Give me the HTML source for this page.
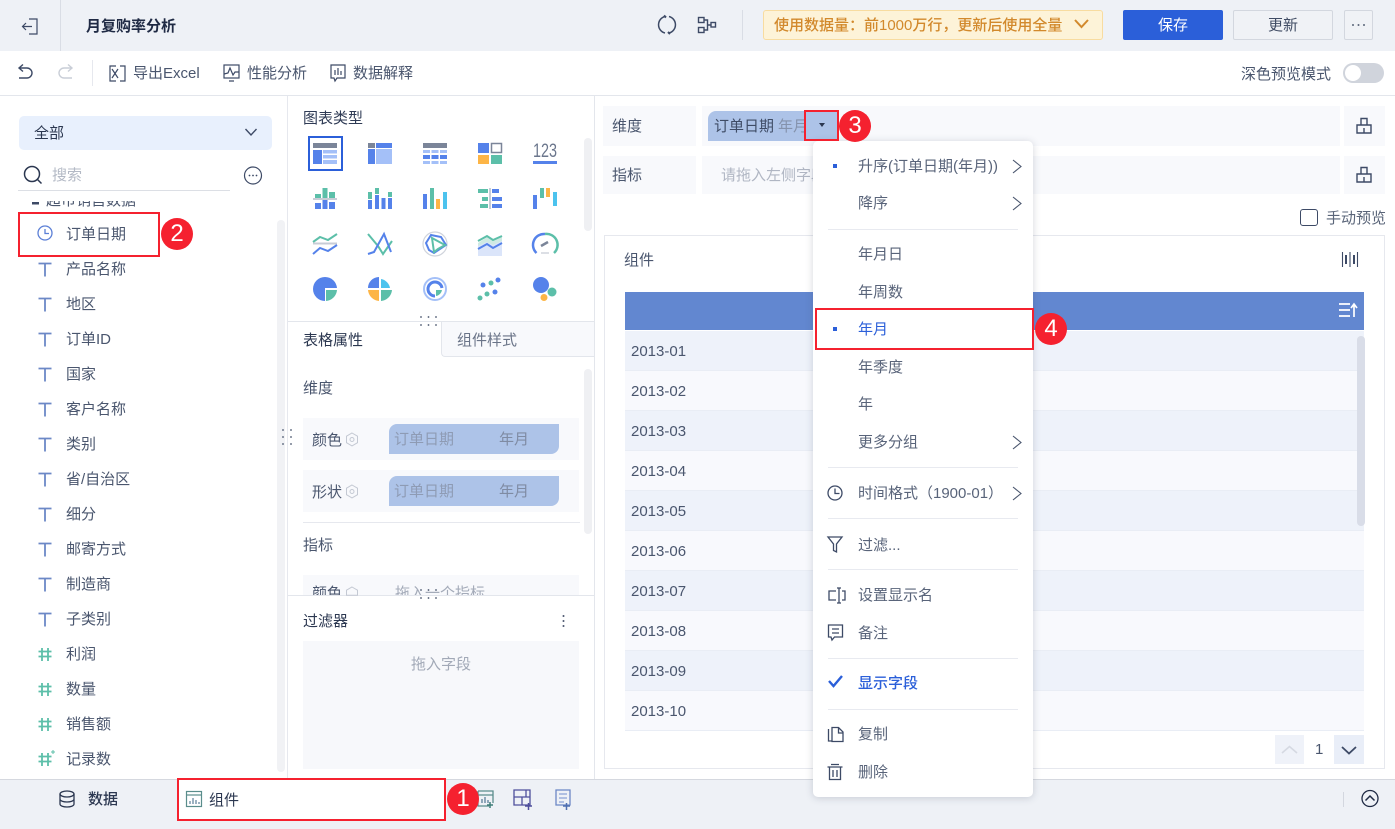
<!DOCTYPE html>
<html lang="zh"><head><meta charset="utf-8"><title>月复购率分析</title>
<style>
html,body{margin:0;padding:0;background:#fff}
#p{position:relative;width:1395px;height:829px;overflow:hidden;background:#fff;font-family:"Liberation Sans","Noto Sans CJK SC",sans-serif;font-size:15px;letter-spacing:0;color:#4a566e}
.b{position:absolute}
.t{position:absolute;line-height:20px;height:20px;white-space:nowrap;transform:translateY(1px)}
svg{position:absolute;left:0;top:0;overflow:visible}
.ic{fill:none;stroke:#3d4a66;stroke-width:1.4}
.red{position:absolute;border:2px solid #f5212f;box-sizing:border-box}
.num{position:absolute;width:32px;height:32px;border-radius:50%;background:#f5212f;color:#fff;font-size:24px;line-height:32px;text-align:center;letter-spacing:0}
.row{position:absolute;left:625px;width:739px;height:40px;box-sizing:border-box;border-bottom:1px solid #e9edf5}
.row span{position:absolute;left:6px;top:11px;line-height:20px;color:#4a566e}
.hr{position:absolute;left:15px;width:190px;height:1px;background:#e8eaf0}
.m{position:absolute;left:45px;line-height:20px;height:20px;white-space:nowrap;color:#59647a;transform:translateY(1px)}
</style></head><body><div id="p">

<!-- bars -->
<div class="b" style="left:0;top:0;width:1395px;height:51px;background:#eef1f6"></div>
<div class="b" style="left:60px;top:0;width:1px;height:51px;background:#d9dde5"></div>
<div class="b" style="left:0;top:95px;width:1395px;height:1px;background:#e3e6ec"></div>
<div class="b" style="left:92px;top:60px;width:1px;height:26px;background:#e6e8ee"></div>
<div class="t" style="left:86px;top:16px;color:#1f2a44;font-weight:bold">月复购率分析</div>
<div class="b" style="left:742px;top:10px;width:1px;height:30px;background:#d9dde5"></div>
<div class="b" style="left:763px;top:10px;width:340px;height:30px;box-sizing:border-box;background:#fdf3d8;border:1px solid #f8dca0;border-radius:3px"></div>
<div class="t" style="left:774px;top:15px;color:#d2892c;font-weight:500">使用数据量：前1000万行，更新后使用全量</div>
<div class="b" style="left:1123px;top:10px;width:100px;height:30px;background:#2b5fd9;border-radius:2px;color:#fff;text-align:center;line-height:32px">保存</div>
<div class="b" style="left:1233px;top:10px;width:100px;height:30px;box-sizing:border-box;background:#f0f2f6;border:1px solid #d3d7df;border-radius:2px;text-align:center;line-height:30px;color:#404c64">更新</div>
<div class="b" style="left:1344px;top:10px;width:29px;height:30px;box-sizing:border-box;background:#f0f2f6;border:1px solid #d3d7df;border-radius:2px"></div>

<div class="t" style="left:133px;top:63px">导出Excel</div>
<div class="t" style="left:247px;top:63px">性能分析</div>
<div class="t" style="left:353px;top:63px">数据解释</div>
<div class="t" style="left:1241px;top:64px">深色预览模式</div>
<div class="b" style="left:1343px;top:63px;width:41px;height:20px;background:#d0d4dc;border-radius:10px"></div>
<div class="b" style="left:1345px;top:65px;width:16px;height:16px;background:#fff;border-radius:50%"></div>

<!-- left panel -->
<div class="b" style="left:287px;top:96px;width:1px;height:683px;background:#e6e8ee"></div>
<div class="b" style="left:19px;top:116px;width:253px;height:34px;background:#e8f0fd;border-radius:5px"></div>
<div class="t" style="left:34px;top:123px;color:#2b3750">全部</div>
<div class="t" style="left:52px;top:165px;color:#b3b9c5">搜索</div>
<div class="b" style="left:18px;top:190px;width:212px;height:1px;background:#dcdfe5"></div>
<div class="b" style="left:30px;top:201px;width:200px;height:9px;overflow:hidden"><div class="t" style="left:16px;top:-11px">超市销售数据</div></div>
<div class="b" style="left:277px;top:220px;width:8px;height:552px;background:#f1f2f5;border-radius:4px"></div>
<div class="t" style="left:66px;top:224px">订单日期</div>
<div class="t" style="left:66px;top:259px">产品名称</div>
<div class="t" style="left:66px;top:294px">地区</div>
<div class="t" style="left:66px;top:329px">订单ID</div>
<div class="t" style="left:66px;top:364px">国家</div>
<div class="t" style="left:66px;top:399px">客户名称</div>
<div class="t" style="left:66px;top:434px">类别</div>
<div class="t" style="left:66px;top:469px">省/自治区</div>
<div class="t" style="left:66px;top:504px">细分</div>
<div class="t" style="left:66px;top:539px">邮寄方式</div>
<div class="t" style="left:66px;top:574px">制造商</div>
<div class="t" style="left:66px;top:609px">子类别</div>
<div class="t" style="left:66px;top:644px">利润</div>
<div class="t" style="left:66px;top:679px">数量</div>
<div class="t" style="left:66px;top:714px">销售额</div>
<div class="t" style="left:66px;top:749px">记录数</div>

<!-- middle panel -->
<div class="b" style="left:594px;top:96px;width:1px;height:683px;background:#e3e6ec"></div>
<div class="t" style="left:303px;top:108px;color:#2f3b55">图表类型</div>
<div class="b" style="left:584px;top:138px;width:8px;height:93px;background:#eff0f3;border-radius:4px"></div>
<div class="b" style="left:308px;top:136px;width:35px;height:35px;box-sizing:border-box;border:2px solid #2b5fd9"></div>
<div class="b" style="left:288px;top:321px;width:306px;height:1px;background:#e3e6ec"></div>
<div class="b" style="left:441px;top:322px;width:153px;height:35px;box-sizing:border-box;background:#f8f9fc;border-left:1px solid #e3e6ec;border-bottom:1px solid #e3e6ec;border-bottom-left-radius:4px"></div>
<div class="t" style="left:303px;top:330px;color:#2b3750">表格属性</div>
<div class="t" style="left:457px;top:330px;color:#6a7488">组件样式</div>
<div class="t" style="left:303px;top:378px;color:#4a566e">维度</div>
<div class="b" style="left:303px;top:418px;width:276px;height:42px;background:#f8f9fc"></div>
<div class="b" style="left:303px;top:470px;width:276px;height:42px;background:#f8f9fc"></div>
<div class="b" style="left:389px;top:424px;width:170px;height:30px;background:#adc3e8;border-radius:8px 0 8px 0"></div>
<div class="b" style="left:389px;top:476px;width:170px;height:30px;background:#adc3e8;border-radius:8px 0 8px 0"></div>
<div class="t" style="left:312px;top:430px">颜色</div>
<div class="t" style="left:312px;top:482px">形状</div>
<div class="t" style="left:394px;top:429px;color:#8e9bb4">订单日期</div>
<div class="t" style="left:499px;top:429px;color:#7f8ba3">年月</div>
<div class="t" style="left:394px;top:481px;color:#8e9bb4">订单日期</div>
<div class="t" style="left:499px;top:481px;color:#7f8ba3">年月</div>
<div class="b" style="left:303px;top:522px;width:277px;height:1px;background:#e6e8ee"></div>
<div class="t" style="left:303px;top:535px">指标</div>
<div class="b" style="left:584px;top:369px;width:8px;height:165px;background:#eff0f3;border-radius:4px"></div>
<div class="b" style="left:288px;top:575px;width:306px;height:20px;overflow:hidden">
  <div class="b" style="left:15px;top:0;width:276px;height:30px;background:#f8f9fc"></div>
  <div class="t" style="left:24px;top:8px">颜色</div>
  <div class="t" style="left:107px;top:8px;color:#a4abb9">拖入一个指标</div>
</div>
<div class="b" style="left:288px;top:595px;width:306px;height:1px;background:#e3e6ec"></div>
<div class="t" style="left:303px;top:611px;color:#2b3750">过滤器</div>
<div class="b" style="left:303px;top:641px;width:276px;height:128px;background:#f7f8fb"></div>
<div class="t" style="left:411px;top:654px;color:#a2a9b7">拖入字段</div>

<!-- right panel -->
<div class="b" style="left:603px;top:106px;width:93px;height:40px;background:#f8f9fc"></div>
<div class="b" style="left:702px;top:106px;width:638px;height:40px;background:#f8f9fc"></div>
<div class="b" style="left:1344px;top:106px;width:41px;height:40px;background:#f8f9fc"></div>
<div class="b" style="left:603px;top:156px;width:93px;height:38px;background:#f8f9fc"></div>
<div class="b" style="left:702px;top:156px;width:638px;height:38px;background:#f8f9fc"></div>
<div class="b" style="left:1344px;top:156px;width:41px;height:38px;background:#f8f9fc"></div>
<div class="t" style="left:612px;top:116px">维度</div>
<div class="t" style="left:612px;top:165px">指标</div>
<div class="b" style="left:708px;top:111px;width:130px;height:30px;background:#adc3e8;border-radius:8px 0 0 0"></div>
<div class="t" style="left:714px;top:116px;color:#3f4c66">订单日期</div>
<div class="t" style="left:778px;top:116px;color:#8492ac">年月</div>
<div class="b" style="left:806px;top:111px;width:32px;height:30px;background:#adc3e8"></div>
<div class="t" style="left:721px;top:165px;color:#b0b6c3">请拖入左侧字段</div>
<div class="b" style="left:1300px;top:209px;width:18px;height:17px;box-sizing:border-box;border:1px solid #3d4a66;border-radius:3px;background:#fff"></div>
<div class="t" style="left:1326px;top:208px;color:#5a6579">手动预览</div>
<div class="b" style="left:604px;top:235px;width:781px;height:534px;box-sizing:border-box;border:1px solid #e6e8ee"></div>
<div class="t" style="left:624px;top:250px">组件</div>
<div class="b" style="left:625px;top:292px;width:739px;height:38px;background:#6287d0"></div>
<div class="row" style="top:331px;background:#eef2fa"><span>2013-01</span></div>
<div class="row" style="top:371px;background:#f8f9fd"><span>2013-02</span></div>
<div class="row" style="top:411px;background:#eef2fa"><span>2013-03</span></div>
<div class="row" style="top:451px;background:#f8f9fd"><span>2013-04</span></div>
<div class="row" style="top:491px;background:#eef2fa"><span>2013-05</span></div>
<div class="row" style="top:531px;background:#f8f9fd"><span>2013-06</span></div>
<div class="row" style="top:571px;background:#eef2fa"><span>2013-07</span></div>
<div class="row" style="top:611px;background:#f8f9fd"><span>2013-08</span></div>
<div class="row" style="top:651px;background:#eef2fa"><span>2013-09</span></div>
<div class="row" style="top:691px;background:#f8f9fd"><span>2013-10</span></div>
<div class="b" style="left:1357px;top:336px;width:8px;height:190px;background:#d9dde8;border-radius:4px"></div>
<div class="b" style="left:1275px;top:735px;width:29px;height:29px;background:#eff2f9"></div>
<div class="t" style="left:1315px;top:739px">1</div>
<div class="b" style="left:1334px;top:735px;width:30px;height:29px;background:#e9eef8"></div>

<!-- bottom bar -->
<div class="b" style="left:0;top:779px;width:1395px;height:50px;background:#eef1f6;border-top:1px solid #d5d8df;box-sizing:border-box"></div>
<div class="t" style="left:88px;top:789px;color:#2b3750;font-weight:500">数据</div>
<div class="b" style="left:177px;top:779px;width:268px;height:41px;background:#fff"></div>
<div class="t" style="left:209px;top:790px;color:#2b3750">组件</div>
<div class="b" style="left:1343px;top:792px;width:1px;height:15px;background:#d3d7df"></div>

<!-- icons -->
<svg width="1395" height="829" viewBox="0 0 1395 829">
<!-- header -->
<g class="ic"><path d="M29 19h8v15h-8M23 26.500h9M26 23l-3.500 3.500L26 30" stroke-width="1.200"/>
<path d="M665 16.500a8.500 8.500 0 0 0 0 16.500M669 16.500a8.500 8.500 0 0 1 0 16.500" stroke-width="1.500"/><path d="M664 15.500l2 2M670 34l-2-2" stroke-width="2"/>
<rect x="698.500" y="17.500" width="5.500" height="5"/><rect x="698.500" y="27.500" width="5.500" height="5"/><rect x="711" y="22.500" width="4.500" height="4.500"/><path d="M704 20h3.500v10H704M707.500 25H711"/>
</g>
<path d="M1075 20l6.500 7 6.500-7" fill="none" stroke="#d2892c" stroke-width="2"/>
<g fill="#5a6579"><circle cx="1353" cy="25" r="1"/><circle cx="1358.500" cy="25" r="1"/><circle cx="1364" cy="25" r="1"/></g>
<!-- toolbar -->
<g class="ic" stroke-width="1.400">
<path d="M20 68h7a5 5 0 0 1 0 10H19M23 64.500l-4 3.500 4 3.500"/>
<path style="stroke:#c9ced7" d="M71 68h-7a5 5 0 0 0 0 10h8M68 64.500l4 3.500-4 3.500"/>
<path d="M116 66h-6v15h6M120 66h5v15h-5M112 69l6 9M118 69l-6 9" stroke-width="1.200"/>
<rect x="224" y="65" width="15" height="13" stroke-width="1.200"/><path d="M224 74l4-1 2-5 3 7 2-3 4 0M229 81h5" stroke-width="1.200"/>
<path d="M331 65h14v13h-8l-2 3-1-3h-3z" stroke-width="1.200"/><path d="M335 70v5M338 68v7M341 71v4" stroke-width="1.200"/>
</g>
<!-- left -->
<g fill="none" stroke="#3d4a66"><path d="M245.500 129l5.500 6 5.500-6" stroke-width="1.400"/>
<circle cx="32" cy="174" r="7.500" stroke="#2b3750" stroke-width="1.500"/><path d="M37.500 179.500l4 4" stroke="#2b3750" stroke-width="1.500"/>
<circle cx="253" cy="175.500" r="8.500" stroke-width="1.200"/></g>
<g fill="#3d4a66"><circle cx="249.500" cy="175.500" r=".9"/><circle cx="253" cy="175.500" r=".9"/><circle cx="256.500" cy="175.500" r=".9"/></g>
<rect x="32" y="202" width="7" height="2.500" fill="#3d4a66"/>
<circle cx="45" cy="233" r="7" fill="none" stroke="#5b7fd6" stroke-width="1.300"/><path d="M45 229v4.500h4" fill="none" stroke="#5b7fd6" stroke-width="1.300"/>
<g fill="none" stroke="#6c88c6" stroke-width="1.800">
<path d="M38.500 263.500h13M45 263.500v13"/><path d="M38.500 298.500h13M45 298.500v13"/><path d="M38.500 333.500h13M45 333.500v13"/><path d="M38.500 368.500h13M45 368.500v13"/><path d="M38.500 403.500h13M45 403.500v13"/><path d="M38.500 438.500h13M45 438.500v13"/><path d="M38.500 473.500h13M45 473.500v13"/><path d="M38.500 508.500h13M45 508.500v13"/><path d="M38.500 543.500h13M45 543.500v13"/><path d="M38.500 578.500h13M45 578.500v13"/><path d="M38.500 613.500h13M45 613.500v13"/>
</g>
<g fill="none" stroke="#5cbfa9" stroke-width="1.800">
<path d="M42 648v13M48 648v13M38.500 651.500h13M38.500 656.500h13"/>
<path d="M42 683v13M48 683v13M38.500 686.500h13M38.500 691.500h13"/>
<path d="M42 718v13M48 718v13M38.500 721.500h13M38.500 726.500h13"/>
<path d="M42 753v13M48 753v13M38.500 756.500h13M38.500 761.500h13"/>
<path d="M53 750v4M51 752h4" stroke-width="1"/>
</g>
<!-- chart icons -->
<g>
<g transform="translate(313 143)"><rect width="24" height="5" fill="#7b8599"/><rect y="7" width="9" height="14" fill="#5582ea"/><rect x="10" y="7" width="14" height="3.500" fill="#a4c0f8"/><rect x="10" y="12" width="14" height="3.500" fill="#a4c0f8"/><rect x="10" y="17" width="14" height="4" fill="#a4c0f8"/></g>
<g transform="translate(368 143)"><rect width="7" height="5" fill="#7b8599"/><rect x="8" width="16" height="5" fill="#5582ea"/><rect y="6" width="7" height="15" fill="#5582ea"/><rect x="8" y="6" width="16" height="15" fill="#a4c0f8"/></g>
<g transform="translate(423 143)"><rect width="24" height="5" fill="#7b8599"/><g fill="#a4c0f8"><rect y="7" width="7" height="3"/><rect x="8.500" y="7" width="7" height="3"/><rect x="17" y="7" width="7" height="3"/><rect y="18" width="7" height="3"/><rect x="8.500" y="18" width="7" height="3"/><rect x="17" y="18" width="7" height="3"/></g><g fill="#5582ea"><rect y="12" width="7" height="4"/><rect x="8.500" y="12" width="7" height="4"/><rect x="17" y="12" width="7" height="4"/></g></g>
<g transform="translate(478 143)"><rect width="11" height="10" fill="#5582ea"/><rect x="13.500" y=".5" width="10" height="9" fill="#fff" stroke="#7b8599" stroke-width="1.500"/><rect y="12" width="11" height="9" fill="#fdb546"/><rect x="13" y="12" width="11" height="9" fill="#5cbfa9"/></g>
<g transform="translate(533 143)"><text x="0" y="14" font-size="19" fill="#6b768c" textLength="24" lengthAdjust="spacingAndGlyphs" style="letter-spacing:0;font-family:'Liberation Sans',sans-serif">123</text><rect y="18" width="24" height="3" fill="#5582ea"/></g>

<g transform="translate(313 188)"><rect y="10" width="24" height="2" fill="#c8ccd6"/><g fill="#5cbfa9"><rect x="2" y="6" width="6" height="4"/><rect x="9.500" y="0" width="5" height="10"/><rect x="16" y="4" width="6" height="6"/></g><g fill="#5582ea"><rect x="2" y="15" width="6" height="6"/><rect x="9.500" y="12" width="5" height="9"/><rect x="16" y="14" width="6" height="7"/></g></g>
<g transform="translate(368 188)"><g fill="#5cbfa9"><rect y="4" width="4" height="7"/><rect x="7" y="0" width="4" height="6"/><rect x="20" y="4" width="4" height="5"/></g><g fill="#5582ea"><rect y="12" width="4" height="9"/><rect x="7" y="7" width="4" height="14"/><rect x="13.500" y="10" width="4" height="11"/><rect x="20" y="10" width="4" height="11"/></g></g>
<g transform="translate(423 188)"><rect y="6" width="4" height="15" fill="#5582ea"/><rect x="7" width="4" height="21" fill="#5cbfa9"/><rect x="13" y="11" width="4" height="10" fill="#fdb546"/><rect x="20" y="4" width="4" height="17" fill="#4cc3ee"/></g>
<g transform="translate(478 188)"><rect x="11" width="2" height="21" fill="#c8ccd6"/><g fill="#5cbfa9"><rect y="1" width="10" height="4"/><rect x="4" y="9" width="6" height="4"/><rect x="2" y="16" width="8" height="4"/></g><g fill="#5582ea"><rect x="14" y="1" width="7" height="4"/><rect x="14" y="9" width="10" height="4"/><rect x="14" y="16" width="10" height="4"/></g></g>
<g transform="translate(533 188)"><rect y="7" width="4" height="14" fill="#5582ea"/><rect x="7" width="4" height="10" fill="#5cbfa9"/><rect x="13" y="0" width="4" height="9" fill="#fdb546"/><rect x="20" y="4" width="4" height="14" fill="#4cc3ee"/></g>

<g transform="translate(313 233)" fill="none" stroke-width="2"><path d="M0 9l7-5 8 3 9-6" stroke="#5cbfa9"/><rect y="9.500" width="24" height="2" fill="#c8ccd6" stroke="none"/><path d="M0 21l7-6 8 3 9-6" stroke="#5582ea"/></g>
<g transform="translate(368 233)" fill="none" stroke-width="2"><path d="M0 1l10 12 5 8 9-13" stroke="#5cbfa9"/><path d="M0 21l6-2 10-18 7 18" stroke="#5582ea"/></g>
<g transform="translate(423 232)" fill="none"><circle cx="12" cy="12" r="12" stroke="#d0d4dc" stroke-width="1.200"/><path d="M3 11l5-8 10 2 5 8-12 8-5-3z" stroke="#5582ea" stroke-width="2"/><path d="M9 6l13 7-7 4-4 3z" stroke="#5cbfa9" stroke-width="2"/></g>
<g transform="translate(478 234)"><path d="M0 9l9-6 6 4 9-5v9l-9 4-6-3-9 4z" fill="#cfeae3"/><path d="M0 12l9-4 6 3 9-4v15H0z" fill="#dbe5fa"/><path d="M0 7l9-5 6 4 9-4" fill="none" stroke="#5cbfa9" stroke-width="2"/><path d="M0 15l9-5 6 4 9-5" fill="none" stroke="#5582ea" stroke-width="2"/></g>
<g transform="translate(533 233)" fill="none"><path d="M3.500 20A11 11 0 0 1 12 1" stroke="#5582ea" stroke-width="2.500"/><path d="M12 1A11 11 0 0 1 21 20" stroke="#5cbfa9" stroke-width="2.500"/><path d="M8 13l7-4" stroke="#7b8599" stroke-width="2.500"/><path d="M8 20h8" stroke="#d0d4dc" stroke-width="1.500"/></g>

<g transform="translate(313 277)"><path d="M12 0a12 12 0 1 0 0 24v-12z" fill="#5582ea"/><path d="M12 0a12 12 0 0 1 12 11H12z" fill="#5582ea"/><path d="M13 13h11a12 12 0 0 1-11 11z" fill="#5cbfa9"/></g>
<g transform="translate(368 277)"><path d="M11 0v11H0A11 11 0 0 1 11 0z" fill="#5582ea"/><path d="M13 2a11 11 0 0 1 9 9h-9z" fill="#4cc3ee"/><path d="M0 13h11v11A12 12 0 0 1 0 13z" fill="#fdb546"/><path d="M13 13h11a12 12 0 0 1-11 11z" fill="#5cbfa9"/></g>
<g transform="translate(423 277)" fill="none"><circle cx="12" cy="12" r="11" stroke="#a4c0f8" stroke-width="2"/><path d="M12 5a7 7 0 1 0 0 14" stroke="#5582ea" stroke-width="3"/><path d="M12 5a7 7 0 0 1 7 6" stroke="#5582ea" stroke-width="3"/><path d="M13 13h6a7 7 0 0 1-6 6z" fill="#5cbfa9"/></g>
<g transform="translate(478 277)" fill="#5582ea"><circle cx="20" cy="3" r="2.500"/><circle cx="5" cy="8" r="2.500"/><circle cx="13" cy="6" r="2.500" fill="#5cbfa9"/><circle cx="17" cy="15" r="2.500"/><circle cx="9" cy="17" r="2.500" fill="#5cbfa9"/><circle cx="2" cy="21" r="2.500" fill="#5cbfa9"/></g>
<g transform="translate(533 277)"><circle cx="8" cy="8" r="8" fill="#5582ea"/><circle cx="19" cy="15" r="4.500" fill="#5cbfa9"/><circle cx="11" cy="20.500" r="3.500" fill="#fdb546"/></g>
</g>
<!-- drag dots -->
<g fill="#4a566e">
<circle cx="421" cy="317" r=".9"/><circle cx="428.500" cy="317" r=".9"/><circle cx="436" cy="317" r=".9"/><circle cx="421" cy="325" r=".9"/><circle cx="428.500" cy="325" r=".9"/><circle cx="436" cy="325" r=".9"/>
<circle cx="421" cy="590" r=".9"/><circle cx="428.500" cy="590" r=".9"/><circle cx="436" cy="590" r=".9"/><circle cx="421" cy="598" r=".9"/><circle cx="428.500" cy="598" r=".9"/><circle cx="436" cy="598" r=".9"/>
<circle cx="283" cy="430" r=".9"/><circle cx="283" cy="437" r=".9"/><circle cx="283" cy="444" r=".9"/><circle cx="291" cy="430" r=".9"/><circle cx="291" cy="437" r=".9"/><circle cx="291" cy="444" r=".9"/>
<circle cx="563.500" cy="616" r="1"/><circle cx="563.500" cy="621" r="1"/><circle cx="563.500" cy="626" r="1"/>
</g>
<!-- gears -->
<g fill="none" stroke="#c4c9d3" stroke-width="1"><path d="M352 433l5.500 3.200v6.500l-5.500 3.200-5.500-3.200v-6.500z"/><circle cx="352" cy="439.500" r="2"/><path d="M352 485l5.500 3.200v6.500l-5.500 3.200-5.500-3.200v-6.500z"/><circle cx="352" cy="491.500" r="2"/><path d="M352 587l5.500 3.200v5h-11v-5z"/></g>
<!-- right icons -->
<g class="ic" stroke-width="1.300">
<path d="M1357 125h14v8h-14zM1361 125v-6.500h6v6.500M1364 128v5"/>
<path d="M1357 174h14v8h-14zM1361 174v-6.500h6v6.500M1364 177v5"/>
<path d="M1342.500 252v15M1357.500 252v15M1350 252v15" stroke-width="1.100"/>
</g>
<path d="M1346 255v9M1354 255v9" stroke="#3d4a66" stroke-width="2"/>
<g stroke="#fff" stroke-width="1.700" fill="none"><path d="M1339 304h11M1339 310h11M1339 316h11M1354 317v-12M1351 308l3-4 3 4"/></g>
<path d="M1282 753l7.500-6.500 7.500 6.500" fill="none" stroke="#d5d9e2" stroke-width="1.600"/>
<path d="M1342 747l7 6.500 7-6.500" fill="none" stroke="#3d4a66" stroke-width="1.800"/>
<!-- bottom -->
<g fill="none" stroke="#2b3750" stroke-width="1.300"><ellipse cx="67" cy="794" rx="7" ry="3"/><path d="M60 794v10c0 4 14 4 14 0v-10M60 799c0 4 14 4 14 0"/></g>
<g fill="none" stroke="#5a8d8c" stroke-width="1.200"><rect x="186.500" y="791.500" width="15" height="15"/><path d="M187 795h14"/><path d="M190 804v-3M193 804v-6M196 804v-4M199 804v-2" stroke="#5c7f9a"/></g>
<g fill="none" stroke-width="1.300"><path d="M478 791h15v12M478 791v15h11M478 795h15" stroke="#5a8d8c"/><path d="M482 803v-4M485 803v-6M488 803v-3" stroke="#5c7f9a"/><path d="M487 805h6M490 802v6" stroke="#3d7d78" stroke-width="1.500"/>
<path d="M514 790h16v15h-16zM514 797h16M522 797v8M526 790v7" stroke="#4f4f9c"/><path d="M525 806h7M528.500 803v7" stroke="#4f4f9c" stroke-width="1.500"/>
<path d="M556 790h14v15h-14z" stroke="#6c88c6"/><path d="M559 794h8M559 798h8M559 802h5" stroke="#8ba3d6"/><path d="M563 806h7M566.500 803v7" stroke="#4f6fb0" stroke-width="1.500"/></g>
<circle cx="1370" cy="798.500" r="8" fill="none" stroke="#1f2a44" stroke-width="1.300"/><path d="M1365.500 800.500l4.500-4.500 4.500 4.500" fill="none" stroke="#1f2a44" stroke-width="1.500"/>
</svg>

<!-- menu -->
<div class="b" style="left:813px;top:141px;width:220px;height:656px;background:#fff;border-radius:5px;box-shadow:0 1px 8px rgba(60,70,90,.22)">
<div class="m" style="top:15px">升序(订单日期(年月))</div>
<div class="m" style="top:52px">降序</div>
<div class="hr" style="top:88px"></div>
<div class="m" style="top:103px">年月日</div>
<div class="m" style="top:141px">年周数</div>
<div class="m" style="top:178px;color:#2b5fd9">年月</div>
<div class="m" style="top:216px">年季度</div>
<div class="m" style="top:253px">年</div>
<div class="m" style="top:291px">更多分组</div>
<div class="hr" style="top:326px"></div>
<div class="m" style="top:342px">时间格式（1900-01）</div>
<div class="hr" style="top:377px"></div>
<div class="m" style="top:394px">过滤...</div>
<div class="hr" style="top:428px"></div>
<div class="m" style="top:444px">设置显示名</div>
<div class="m" style="top:482px">备注</div>
<div class="hr" style="top:517px"></div>
<div class="m" style="top:532px;color:#2b5fd9;font-weight:500">显示字段</div>
<div class="hr" style="top:568px"></div>
<div class="m" style="top:583px">复制</div>
<div class="m" style="top:621px">删除</div>
<svg width="220" height="656" viewBox="0 0 220 656">
<rect x="20" y="23" width="4" height="4" fill="#2b5fd9"/>
<rect x="20" y="186" width="4" height="4" fill="#2b5fd9"/>
<g fill="none" stroke="#4a566e" stroke-width="1.100">
<path d="M200 19l8 6.500-8 6.500"/><path d="M200 56l8 6.500-8 6.500"/><path d="M200 295l8 6.500-8 6.500"/><path d="M200 346l8 6.500-8 6.500"/>
</g>
<g fill="none" stroke="#3d4a66" stroke-width="1.300">
<circle cx="22" cy="352" r="7"/><path d="M22 347.500v5h4.500"/>
<path d="M15 396h14l-5.500 7v8l-3-1.500v-6.500z"/>
<path d="M23 450h-7v9h7M29 450h3v9h-3M26 447v15M24 447h4M24 462h4"/>
<path d="M15.500 484h14v12h-8l-2.500 3-1-3h-2.500zM19 488h7M19 492h7"/>
<path d="M15.500 588v12h3M19 586.500h6.500l4.500 4.500v9.500h-11zM25.500 587v5h4.500"/>
<path d="M14.500 626h15M18 623.500h8M16.500 626v12.500h11V626M20 629v7M24 629v7"/>
</g>
<path d="M16 540l4.500 5L29 535" fill="none" stroke="#2b5fd9" stroke-width="2.400"/>
</svg>
</div>

<!-- pill arrow on top of menu edge -->
<svg width="1395" height="829" viewBox="0 0 1395 829"><path d="M819 123h6l-3 4z" fill="#2b3750"/></svg>

<!-- annotations -->
<div class="red" style="left:177px;top:778px;width:269px;height:43px"></div>
<div class="red" style="left:18px;top:212px;width:142px;height:45px"></div>
<div class="red" style="left:804px;top:110px;width:35px;height:31px"></div>
<div class="red" style="left:815px;top:308px;width:219px;height:42px"></div>
<div class="num" style="left:447px;top:783px">1</div>
<div class="num" style="left:161px;top:218px">2</div>
<div class="num" style="left:839px;top:110px">3</div>
<div class="num" style="left:1035px;top:313px">4</div>
</div></body></html>
